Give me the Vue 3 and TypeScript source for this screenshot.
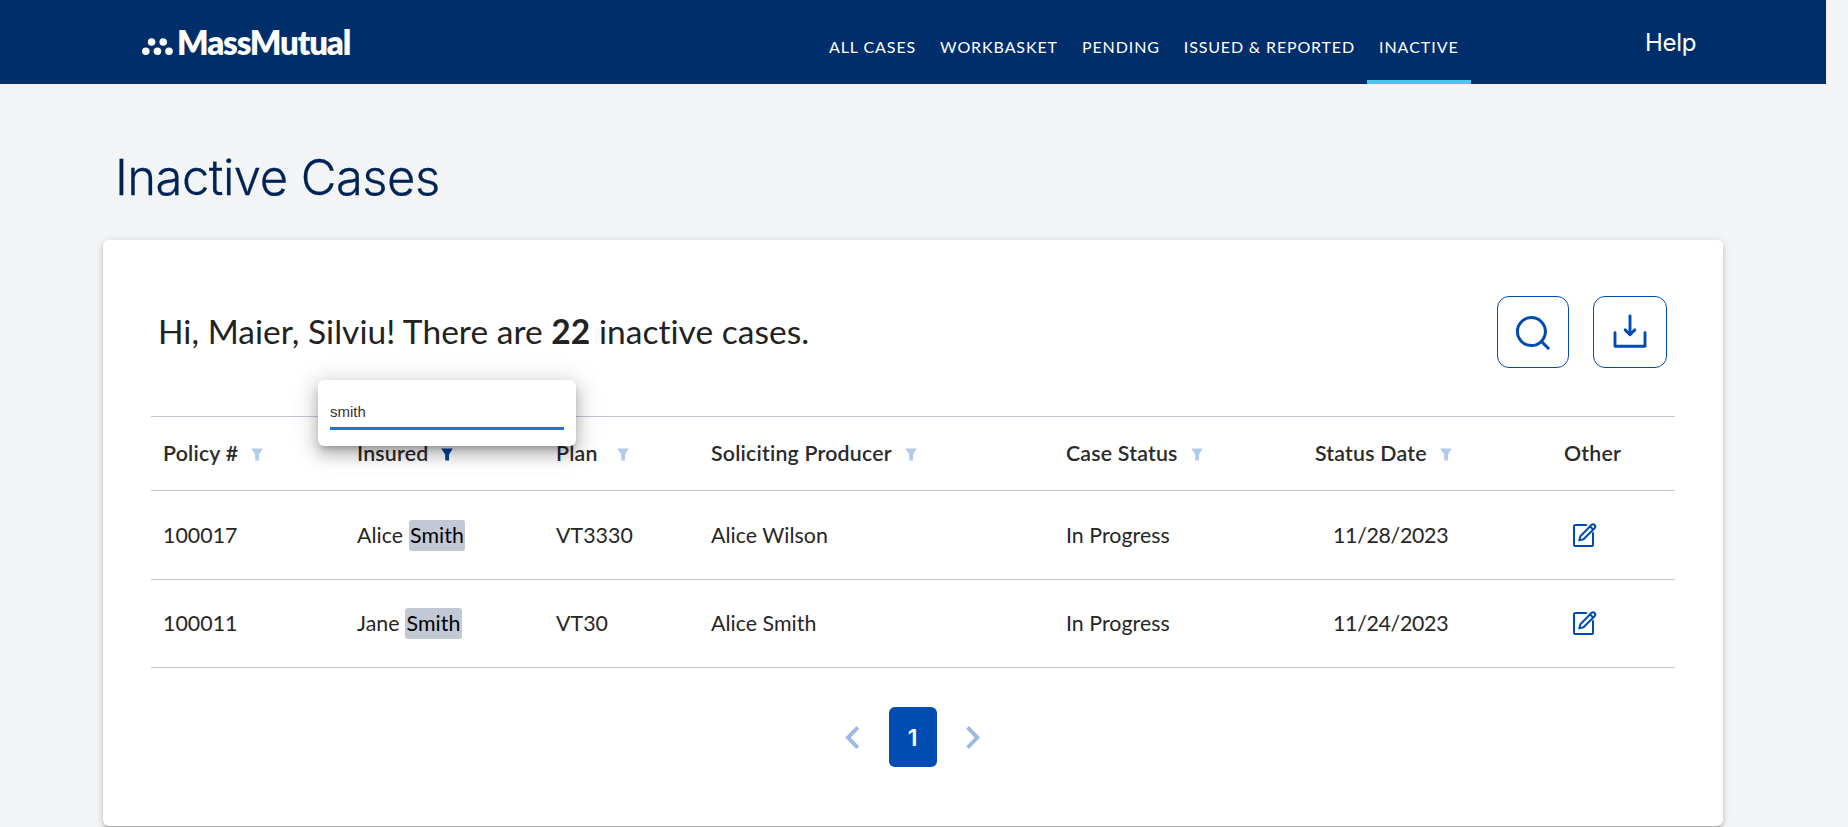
<script setup lang="ts">
import { computed, ref } from 'vue'

interface NavItem { label: string; active?: boolean; tight?: boolean }
interface Column { key: string; label: string; filter: boolean; active?: boolean }
interface CaseRow { policy: string; insured: string; plan: string; producer: string; status: string; date: string }

const nav: NavItem[] = [
  { label: 'ALL CASES' },
  { label: 'WORKBASKET' },
  { label: 'PENDING' },
  { label: 'ISSUED & REPORTED', tight: true },
  { label: 'INACTIVE', active: true },
]

const columns: Column[] = [
  { key: 'policy', label: 'Policy #', filter: true },
  { key: 'insured', label: 'Insured', filter: true, active: true },
  { key: 'plan', label: 'Plan', filter: true },
  { key: 'producer', label: 'Soliciting Producer', filter: true },
  { key: 'status', label: 'Case Status', filter: true },
  { key: 'date', label: 'Status Date', filter: true },
  { key: 'other', label: 'Other', filter: false },
]

const cases: CaseRow[] = [
  { policy: '100017', insured: 'Alice Smith', plan: 'VT3330', producer: 'Alice Wilson', status: 'In Progress', date: '11/28/2023' },
  { policy: '100011', insured: 'Jane Smith', plan: 'VT30', producer: 'Alice Smith', status: 'In Progress', date: '11/24/2023' },
]

const query = ref('smith')

const rows = computed(() =>
  cases.map((c) => {
    const at = query.value ? c.insured.toLowerCase().indexOf(query.value.toLowerCase()) : -1
    const end = at + query.value.length
    return {
      ...c,
      before: at < 0 ? c.insured : c.insured.slice(0, at),
      match: at < 0 ? '' : c.insured.slice(at, end),
      after: at < 0 ? '' : c.insured.slice(end),
    }
  }),
)
</script>

<template>
  <div class="page">
    <header class="topbar">
      <div class="logo">
        <svg class="dots" width="31" height="18" viewBox="0 0 31 18" fill="#fff">
          <circle cx="9.6" cy="4" r="3.8" /><circle cx="21.2" cy="4" r="3.8" />
          <circle cx="3.8" cy="13.3" r="3.8" /><circle cx="15.4" cy="13.3" r="3.8" /><circle cx="27" cy="13.3" r="3.8" />
        </svg>
        <span class="wordmark">MassMutual</span>
      </div>
      <nav class="nav">
        <a v-for="n in nav" :key="n.label" class="nav-item" :class="{ active: n.active, tight: n.tight }">{{ n.label }}</a>
      </nav>
      <a class="help">Help</a>
    </header>

    <h1 class="title">Inactive Cases</h1>

    <main class="card">
      <div class="card-head">
        <p class="greeting">Hi, Maier, Silviu! There are <b>22</b> inactive cases.</p>
        <div class="actions">
          <button class="action search" aria-label="Search">
            <svg width="36" height="36" viewBox="0 0 36 36" fill="none" stroke="#004cb3" stroke-width="3" stroke-linecap="round">
              <circle cx="16.4" cy="17.6" r="14" /><path d="M26.6 27.6l6.6 6.6" />
            </svg>
          </button>
          <button class="action download" aria-label="Download">
            <svg width="36" height="36" viewBox="0 0 36 36" fill="none" stroke="#004cb3" stroke-width="2.9" stroke-linecap="round" stroke-linejoin="round">
              <path d="M3 18.7v13.6h30V18.7M18 2v18.4M13.2 15.9l4.8 4.8 4.8-4.8" />
            </svg>
          </button>
        </div>
      </div>

      <div class="table-wrap">
        <table class="table">
          <colgroup>
            <col v-for="c in columns" :key="c.key" :class="'col-' + c.key" />
          </colgroup>
          <thead>
            <tr>
              <th v-for="c in columns" :key="c.key" :class="'h-' + c.key">
                <span class="th-in">
                  <span>{{ c.label }}</span>
                  <svg v-if="c.filter" class="filter" :class="{ active: c.active }" width="12" height="13" viewBox="0 0 12 13">
                    <path d="M.2.5h11.6L8 6.4V12.6H4.2V6.4z" />
                  </svg>
                </span>
              </th>
            </tr>
          </thead>
          <tbody>
            <tr v-for="r in rows" :key="r.policy">
              <td>{{ r.policy }}</td>
              <td>{{ r.before }}<mark v-if="r.match">{{ r.match }}</mark>{{ r.after }}</td>
              <td>{{ r.plan }}</td>
              <td>{{ r.producer }}</td>
              <td>{{ r.status }}</td>
              <td class="date">{{ r.date }}</td>
              <td class="other">
                <svg class="edit" width="24" height="24" viewBox="0 0 24 24" fill="none" stroke="#004cb3" stroke-width="2" stroke-linecap="round" stroke-linejoin="round">
                  <path d="M13.2 2H2.6Q1 2 1 3.6V21.4Q1 23 2.6 23H18.4Q20 23 20 21.4V10" />
                  <path d="M6.2 17.4L7.4 13.2L18.6 1.8Q20.2.6 21.6 2Q23 3.4 21.8 5L10.5 16.3z" /><path d="M17.2 3.6l2.9 2.9" />
                </svg>
              </td>
            </tr>
          </tbody>
        </table>

        <div class="popup">
          <input v-model="query" class="popup-input" type="text" spellcheck="false" />
        </div>
      </div>

      <div class="pager">
        <svg width="15" height="24" viewBox="0 0 15 24" fill="none" stroke="#9bbae2" stroke-width="3.8"><path d="M12.8 2.4L3 12.6l9.8 10" /></svg>
        <span class="page-num">1</span>
        <svg width="15" height="24" viewBox="0 0 15 24" fill="none" stroke="#9bbae2" stroke-width="3.8"><path d="M1.6 2.4L11.4 12.6 1.6 22.6" /></svg>
      </div>
    </main>
  </div>
</template>

<style>
body { background: #f2f4f6; overflow: hidden; }
</style>

<style scoped>
.page { width: 1826px; height: 827px; overflow: hidden; font-family: Lato, "Open Sans", sans-serif; font-variant-ligatures: none; color: #222; }
.topbar { height: 84px; background: #002e6a; color: #fff; display: flex; align-items: stretch; box-sizing: border-box; padding-left: 142px; }
.logo { width: 675px; display: flex; align-items: flex-start; }
.dots { margin-top: 38px; flex: none; }
.wordmark { font-size: 33px; font-weight: 800; line-height: 40px; letter-spacing: -1.15px; margin: 22px 0 0 4px; }
.nav { display: flex; width: 829px; }
.nav-item { padding: 0 12px; font-size: 16px; line-height: 94px; height: 80px; letter-spacing: .9px; white-space: nowrap; }
.nav-item.tight { letter-spacing: .84px; }
.nav-item.active { letter-spacing: 1px; border-bottom: 4px solid #4bc7ec; }
.help { font-family: Inter, sans-serif; font-size: 24px; line-height: 86px; letter-spacing: -.3px; margin-left: -1px; }
.title { margin: 64px 0 0 115px; font: 300 49px/60px Inter, sans-serif; letter-spacing: -.53px; color: #002353; -webkit-text-stroke: .3px #002353; }
.card { box-sizing: border-box; width: 1620px; height: 586px; margin: 32px 0 0 103px; padding: 56px 48px 0; background: #fff; border-radius: 6px; box-shadow: 0 3px 3px -2px rgba(0,0,0,.2), 0 3px 4px 0 rgba(0,0,0,.14), 0 1px 8px 0 rgba(0,0,0,.12); }
.card-head { height: 72px; display: flex; justify-content: space-between; padding: 0 8px 0 7px; }
.greeting { margin: 0; font-size: 33.5px; line-height: 70px; letter-spacing: .04px; }
.greeting b { font-weight: 700; }
.actions { display: flex; gap: 24px; }
.action { display: flex; align-items: center; justify-content: center; box-sizing: border-box; height: 72px; padding: 0; background: #fff; border: 1px solid #004cb3; border-radius: 12px; }
.search { width: 72px; }
.download { width: 74px; }
.table-wrap { position: relative; margin-top: 48px; }
.table { width: 1524px; table-layout: fixed; border-collapse: separate; border-spacing: 0; border-top: 1px solid #bfc7d4; font-size: 21.33px; }
.col-policy { width: 194px; }
.col-insured { width: 199px; }
.col-plan { width: 155px; }
.col-producer { width: 355px; }
.col-status { width: 249px; }
.col-date { width: 249px; }
th, td { box-sizing: border-box; padding: 0 0 2px 12px; text-align: left; border-bottom: 1px solid #bfc7d4; line-height: 24px; }
th { height: 74px; font-weight: 600; letter-spacing: .2px; color: #2b2b2b; }
td { height: 89px; padding-bottom: 0; letter-spacing: .05px; color: #262626; }
tbody tr:last-child td { height: 88px; padding-bottom: 1px; }
.th-in { display: flex; align-items: center; gap: 13px; }
.h-plan .th-in { gap: 19px; }
.filter { fill: #b3cbea; margin-top: 3px; }
.filter.active { fill: #00429d; }
mark { display: inline-block; background: #c2c9d5; color: #000; border-radius: 3px; padding: 0 1.5px; line-height: 31px; }
td.date { padding-left: 30px; letter-spacing: -.3px; }
td.other { padding-left: 21px; }
.edit { display: block; }
.popup { position: absolute; left: 167px; top: -36px; box-sizing: border-box; width: 258px; height: 66px; padding: 20px 12px 0; background: #fff; border-radius: 6px; box-shadow: 0 5px 6px -3px rgba(0,0,0,.25), 0 8px 14px 1px rgba(0,0,0,.17), 0 4px 24px 5px rgba(0,0,0,.14); }
.popup-input { display: block; box-sizing: border-box; width: 234px; height: 30px; border: 0; border-bottom: 3px solid #1976d2; outline: 0; padding: 0 0 4px; background: none; font: 15px "Liberation Sans", Arial, sans-serif; color: #333; }
.pager { display: flex; align-items: center; justify-content: center; gap: 29px; margin-top: 39px; }
.page-num { width: 48px; height: 60px; border-radius: 6px; background: #004cb3; color: #fff; font: 600 23px/63px Inter, sans-serif; text-align: center; text-indent: -1px; }
</style>
